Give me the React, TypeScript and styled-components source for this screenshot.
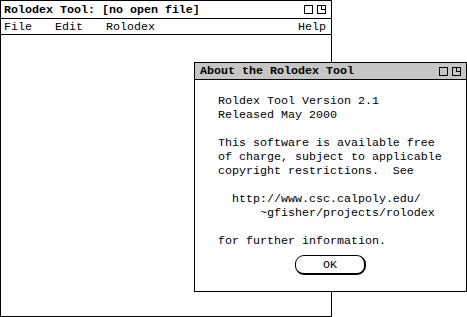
import React from "react";
import styled, { createGlobalStyle } from "styled-components";

const GlobalStyle = createGlobalStyle`
  html, body {
    margin: 0;
    padding: 0;
    background: #ffffff;
  }
  body {
    font-family: "Liberation Mono", "DejaVu Sans Mono", monospace;
    font-size: 11.67px;
    color: #000000;
  }
`;

const Desktop = styled.div`
  position: relative;
  width: 467px;
  height: 317px;
  overflow: hidden;
  background: #ffffff;
`;

const Window = styled.div<{ $left: number; $top: number; $width: number; $height: number }>`
  position: absolute;
  left: ${(p) => p.$left}px;
  top: ${(p) => p.$top}px;
  width: ${(p) => p.$width}px;
  height: ${(p) => p.$height}px;
  box-sizing: border-box;
  border: 1px solid #000000;
  background: #ffffff;
  display: flex;
  flex-direction: column;
`;

const TitleBar = styled.div<{ $active?: boolean; $height: number }>`
  height: ${(p) => p.$height}px;
  flex: none;
  display: flex;
  align-items: center;
  justify-content: space-between;
  padding: 0 5px 0 ${(p) => (p.$active ? 5 : 3)}px;
  border-bottom: 1px solid #000000;
  background: ${(p) => (p.$active ? "#c6c6c6" : "#ffffff")};
`;

const TitleText = styled.span`
  font-weight: bold;
  white-space: pre;
  line-height: 14px;
`;

const TitleButtons = styled.div`
  display: flex;
  gap: 4px;
`;

const MenuBar = styled.div`
  height: 15px;
  flex: none;
  display: flex;
  align-items: center;
  gap: 23px;
  padding: 0 5px 0 3px;
  border-bottom: 1px solid #000000;
`;

const MenuItem = styled.span<{ $right?: boolean }>`
  line-height: 14px;
  margin-left: ${(p) => (p.$right ? "auto" : "0")};
`;

const DialogBody = styled.div`
  flex: 1;
  display: flex;
  flex-direction: column;
  padding: 14px 0 0 23px;
`;

const Message = styled.div`
  white-space: pre;
  line-height: 14px;
`;

const ButtonRow = styled.div`
  display: flex;
  justify-content: center;
  margin-top: 7px;
  padding-right: 23px;
`;

const OkButton = styled.button`
  width: 71px;
  height: 20px;
  box-sizing: border-box;
  padding: 0;
  border: 1px solid #000000;
  border-right-width: 2px;
  border-bottom-width: 2px;
  border-radius: 9px;
  background: #ffffff;
  font-family: "Liberation Mono", "DejaVu Sans Mono", monospace;
  font-size: 11.67px;
  color: #000000;
  line-height: 14px;
`;

const BoxIcon: React.FC<{ zoomed?: boolean }> = ({ zoomed }) => (
  <svg width="9" height="9" viewBox="0 0 9 9" shapeRendering="crispEdges">
    <rect x="0.5" y="0.5" width="8" height="8" fill="none" stroke="#000" strokeWidth="1" />
    {zoomed && (
      <path d="M4.5 0.5 V4.5 H8.5" fill="none" stroke="#000" strokeWidth="1" />
    )}
  </svg>
);

const message = `Roldex Tool Version 2.1
Released May 2000

This software is available free
of charge, subject to applicable
copyright restrictions.  See

  http://www.csc.calpoly.edu/
      ~gfisher/projects/rolodex

for further information.`;

export default function App() {
  return (
    <>
      <GlobalStyle />
      <Desktop>
        <Window $left={0} $top={0} $width={332} $height={317}>
          <TitleBar $height={17}>
            <TitleText>Rolodex Tool: [no open file]</TitleText>
            <TitleButtons>
              <BoxIcon />
              <BoxIcon zoomed />
            </TitleButtons>
          </TitleBar>
          <MenuBar>
            <MenuItem>File</MenuItem>
            <MenuItem>Edit</MenuItem>
            <MenuItem>Rolodex</MenuItem>
            <MenuItem $right>Help</MenuItem>
          </MenuBar>
        </Window>
        <Window $left={194} $top={62} $width={273} $height={230}>
          <TitleBar $active $height={16}>
            <TitleText>About the Rolodex Tool</TitleText>
            <TitleButtons>
              <BoxIcon />
              <BoxIcon zoomed />
            </TitleButtons>
          </TitleBar>
          <DialogBody>
            <Message>{message}</Message>
            <ButtonRow>
              <OkButton>OK</OkButton>
            </ButtonRow>
          </DialogBody>
        </Window>
      </Desktop>
    </>
  );
}
